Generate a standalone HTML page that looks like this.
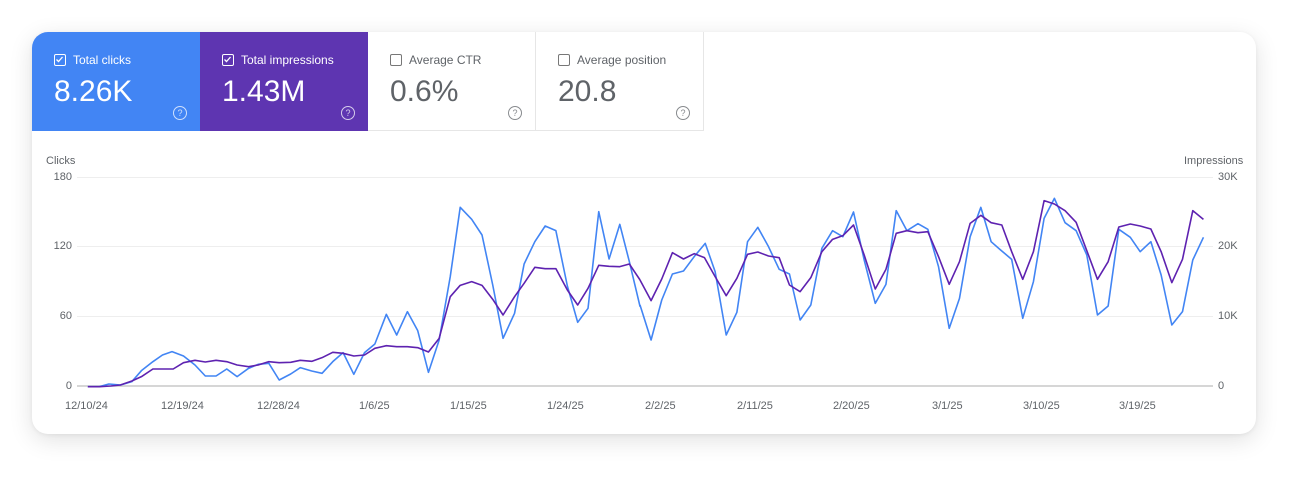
<!DOCTYPE html>
<html><head><meta charset="utf-8"><style>
*{margin:0;padding:0;box-sizing:border-box}
body{width:1304px;height:482px;background:#fff;font-family:"Liberation Sans",Arial,sans-serif;position:relative;overflow:hidden}
.card{position:absolute;left:32px;top:32px;width:1224px;height:402px;background:#fff;border-radius:16px;box-shadow:0 6px 24px rgba(0,0,0,0.12),0 1px 4px rgba(0,0,0,0.06);overflow:hidden}
.tile{position:absolute;top:0;width:168px;height:99px}
.tile .t{position:absolute;left:22px;top:21px;font-size:12px;display:flex;align-items:center}
.cb{width:12px;height:12px;border:1.5px solid currentColor;border-radius:2px;margin-right:7px;position:relative}
.tile .v{position:absolute;left:22px;top:43px;font-size:30px}
.q{position:absolute;right:13px;top:74px;width:14px;height:14px;border:1.2px solid currentColor;border-radius:50%;font-size:9px;text-align:center;line-height:12px;opacity:.75}
.lab{position:absolute;font-size:11px;color:#5f6368}
</style></head><body>
<div class="card">
 <div class="tile" style="left:0;background:#4285f4;color:#fff"><div class="t"><span class="cb"><svg width="9" height="9" style="position:absolute;left:0;top:0" viewBox="0 0 9 9"><path d="M1.5 4.5 L3.5 6.5 L7.5 2" stroke="#fff" stroke-width="1.3" fill="none"/></svg></span>Total clicks</div><div class="v">8.26K</div><div class="q">?</div></div>
 <div class="tile" style="left:168px;background:#5e35b1;color:#fff"><div class="t"><span class="cb"><svg width="9" height="9" style="position:absolute;left:0;top:0" viewBox="0 0 9 9"><path d="M1.5 4.5 L3.5 6.5 L7.5 2" stroke="#fff" stroke-width="1.3" fill="none"/></svg></span>Total impressions</div><div class="v">1.43M</div><div class="q">?</div></div>
 <div class="tile" style="left:336px;color:#5f6368;border-right:1px solid #e6e6e6;border-bottom:1px solid #e6e6e6"><div class="t"><span class="cb" style="color:#777"></span>Average CTR</div><div class="v">0.6%</div><div class="q">?</div></div>
 <div class="tile" style="left:504px;color:#5f6368;border-right:1px solid #e6e6e6;border-bottom:1px solid #e6e6e6"><div class="t"><span class="cb" style="color:#777"></span>Average position</div><div class="v">20.8</div><div class="q">?</div></div>
</div>
<div class="lab" style="left:46px;top:155px">Clicks</div>
<div class="lab" style="left:1184px;top:155px">Impressions</div>
<div class="lab" style="left:40px;top:171px;width:32px;text-align:right">180</div>
<div class="lab" style="left:40px;top:240px;width:32px;text-align:right">120</div>
<div class="lab" style="left:40px;top:310px;width:32px;text-align:right">60</div>
<div class="lab" style="left:40px;top:380px;width:32px;text-align:right">0</div>
<div class="lab" style="left:1218px;top:171px">30K</div>
<div class="lab" style="left:1218px;top:240px">20K</div>
<div class="lab" style="left:1218px;top:310px">10K</div>
<div class="lab" style="left:1218px;top:380px">0</div>
<div class="lab" style="left:65px;top:400px">12/10/24</div>
<div class="lab" style="left:161px;top:400px">12/19/24</div>
<div class="lab" style="left:257px;top:400px">12/28/24</div>
<div class="lab" style="left:359px;top:400px">1/6/25</div>
<div class="lab" style="left:450px;top:400px">1/15/25</div>
<div class="lab" style="left:547px;top:400px">1/24/25</div>
<div class="lab" style="left:645px;top:400px">2/2/25</div>
<div class="lab" style="left:737px;top:400px">2/11/25</div>
<div class="lab" style="left:833px;top:400px">2/20/25</div>
<div class="lab" style="left:932px;top:400px">3/1/25</div>
<div class="lab" style="left:1023px;top:400px">3/10/25</div>
<div class="lab" style="left:1119px;top:400px">3/19/25</div>
<svg width="1304" height="482" style="position:absolute;left:0;top:0">
 <g stroke="#eeeeee" stroke-width="1">
  <line x1="77" y1="177.5" x2="1213" y2="177.5"/>
  <line x1="77" y1="246.5" x2="1213" y2="246.5"/>
  <line x1="77" y1="316.5" x2="1213" y2="316.5"/>
 </g>
 <line x1="77" y1="386" x2="1213" y2="386" stroke="#c8c8c8" stroke-width="1.5"/>
 <g transform="translate(40,180) scale(0.3827,0.33333)" fill="none" stroke-width="1.6" stroke-linejoin="round">
  <polyline vector-effect="non-scaling-stroke" stroke="#4285f4" points="125,620 155,620 180,612 210,615 240,605 265,572 295,545 320,525 345,515 375,528 405,555 432,588 460,588 488,567 515,590 545,565 570,553 598,550 625,600 655,582 680,563 710,573 737,580 765,545 792,518 820,583 848,518 875,492 905,403 932,465 960,395 987,452 1015,577 1043,480 1072,290 1098,82 1128,118 1155,165 1183,315 1210,475 1240,400 1265,252 1293,185 1320,138 1348,152 1378,318 1405,427 1432,385 1460,95 1487,237 1515,133 1540,245 1568,380"/>
  <polyline vector-effect="non-scaling-stroke" stroke="#5e22b0" points="125,620 155,620 185,618 210,615 240,603 265,590 295,567 320,567 348,567 375,548 405,541 432,546 460,541 488,545 515,555 545,560 570,555 598,545 625,548 655,547 680,541 710,544 737,533 765,517 792,520 820,528 848,525 875,505 905,497 932,500 960,500 987,503 1015,516 1043,475 1072,350 1098,316 1128,305 1155,316 1183,358 1210,405 1240,350 1265,310 1293,262 1320,266 1348,266 1378,330 1405,375 1432,325 1460,256 1487,259 1515,260 1540,252 1568,300"/>
 </g>
 <g transform="translate(640,180) scale(0.3954,0.33333)" fill="none" stroke-width="1.6" stroke-linejoin="round">
  <polyline vector-effect="non-scaling-stroke" stroke="#4285f4" points="0,375 28,480 55,360 82,282 110,273 137,230 165,190 190,275 218,465 245,397 272,185 298,142 325,200 352,268 378,282 405,420 432,375 460,205 487,152 513,170 540,96 567,240 595,370 622,313 648,92 675,152 703,131 728,148 755,260 782,445 808,355 835,170 862,82 888,185 912,210 940,238 968,415 995,305 1022,115 1048,55 1075,128 1103,152 1130,225 1157,405 1184,378 1211,148 1240,172 1265,215 1292,185 1318,285 1345,435 1372,395 1398,240 1425,172"/>
  <polyline vector-effect="non-scaling-stroke" stroke="#5e22b0" points="0,300 28,362 55,297 82,218 110,237 137,221 163,233 190,290 218,347 245,295 272,223 298,216 325,228 352,233 378,315 405,335 432,293 460,215 487,178 513,167 540,135 567,225 595,327 622,268 648,160 675,152 703,158 728,155 755,230 782,313 808,245 835,130 862,106 888,128 915,135 940,215 968,298 995,215 1022,62 1048,72 1075,92 1103,127 1130,212 1157,298 1184,245 1211,141 1240,132 1265,138 1292,147 1318,215 1345,308 1372,238 1398,92 1425,118"/>
 </g>
</svg>
</body></html>
